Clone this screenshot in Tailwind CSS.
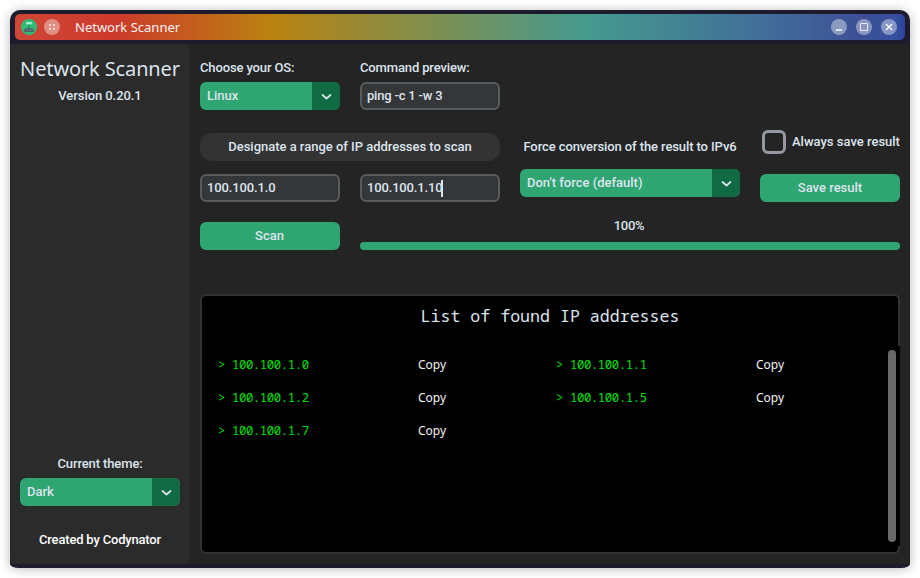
<!DOCTYPE html>
<html lang="en">
<head>
<meta charset="utf-8">
<title>Network Scanner</title>
<script src="https://cdn.jsdelivr.net/npm/@tailwindcss/browser@4"></script>
</head>
<body class="h-[578px] w-[920px] overflow-hidden bg-white p-[10px] font-['Roboto',sans-serif] text-[13px] leading-4 font-medium text-[#dce4ee]">
<div class="flex h-[558px] w-[900px] flex-col overflow-hidden rounded-[10px_10px_9px_9px/10px_10px_4px_4px] bg-[#1e1c2c] shadow-[0_1px_11px_rgba(0,0,0,0.28)]">
  <header class="h-[34px] shrink-0 px-[5px] pt-1">
    <div class="flex h-[26px] items-center rounded-[5px] bg-[linear-gradient(90deg,#ce4737_0%,#ce392c_11%,#b98310_29%,#459b8e_64%,#41699a_86%,#3c5096_95%,#3650a0_99%,#2b419b_100%)] pr-2 pl-[6px]">
      <svg class="size-4" viewBox="0 0 16 16"><circle cx="8" cy="8" r="8" fill="#2fba76"/><rect x="5" y="3" width="6" height="2.6" rx="1.3" fill="#a5efd0"/><path d="M8 5.5V10" stroke="#238057"/><path d="M4.7 9.5h6.6l1.7 1.3v2H3v-2z" fill="#3c555f"/><path d="M3.5 11.2h9" stroke="#7a8290"/></svg>
      <svg class="ml-[7px] size-4" viewBox="0 0 16 16"><circle cx="8" cy="8" r="8" fill="#fff" fill-opacity=".4"/><g fill="#fff"><circle cx="6" cy="6.1" r=".95"/><circle cx="10" cy="6.1" r=".95"/><circle cx="6" cy="9.8" r=".95"/><circle cx="10" cy="9.8" r=".95"/></g></svg>
      <span class="ml-[15px] font-['Noto_Sans',sans-serif] text-[13px] font-normal text-[#f4f4f4]">Network Scanner</span>
      <div class="ml-auto flex gap-[9px]">
        <svg class="size-4" viewBox="0 0 16 16"><circle cx="8" cy="8" r="8" fill="#fff" fill-opacity=".4"/><path d="M5 11h6" stroke="#fff" stroke-width="1.4"/></svg>
        <svg class="size-4" viewBox="0 0 16 16"><circle cx="8" cy="8" r="8" fill="#fff" fill-opacity=".4"/><path d="M4.5 4.5h7v7h-7z" fill="none" stroke="#e7eaf4"/></svg>
        <svg class="size-4" viewBox="0 0 16 16"><circle cx="8" cy="8" r="8" fill="#fff" fill-opacity=".4"/><path d="m5 5 6 6m0-6-6 6" stroke="#fff" stroke-width="1.4"/></svg>
      </div>
    </div>
  </header>
  <div class="flex h-[520px] bg-[#242424]">
    <aside class="flex w-[180px] flex-col items-center rounded-[5px] bg-[#2b2b2b] px-[10px]">
      <h1 class="mt-[11px] font-['Noto_Sans',sans-serif] text-[20px] leading-7 font-normal tracking-[-0.13px] whitespace-nowrap">Network Scanner</h1>
      <p class="mt-[5px] tracking-[-0.07px]">Version 0.20.1</p>
      <p class="mt-auto tracking-[-0.12px]">Current theme:</p>
      <button class="mt-[6px] flex h-7 w-full overflow-hidden rounded-[6px] bg-[#2fa572] text-left leading-7"><span class="flex-1 pl-[7px]">Dark</span><span class="flex w-7 items-center justify-center self-stretch bg-[#106a43]"><svg class="h-7 w-7" viewBox="0 0 28 28"><path d="m10.5 13 4 3.5 4-3.5" fill="none" stroke="#dce4ee" stroke-width="1.7" stroke-linecap="round" stroke-linejoin="round"/></svg></span></button>
      <p class="mt-[26px] mb-4 tracking-[-0.18px] text-white">Created by Codynator</p>
    </aside>
    <main class="flex flex-1 flex-col px-[10px]">
      <section class="mt-4 flex gap-5">
        <div class="w-[140px]">
          <p class="tracking-[-0.13px]">Choose your OS:</p>
          <button class="mt-[6px] flex h-7 w-full overflow-hidden rounded-[6px] bg-[#2fa572] text-left leading-7"><span class="flex-1 pl-[7px]">Linux</span><span class="flex w-7 items-center justify-center self-stretch bg-[#106a43]"><svg class="h-7 w-7" viewBox="0 0 28 28"><path d="m10.5 13 4 3.5 4-3.5" fill="none" stroke="#dce4ee" stroke-width="1.7" stroke-linecap="round" stroke-linejoin="round"/></svg></span></button>
        </div>
        <div class="w-[140px]">
          <p class="tracking-[-0.14px]">Command preview:</p>
          <div class="mt-[6px] flex h-7 items-center rounded-[6px] border-2 border-[#565b5e] bg-[#343638] pl-[5px] tracking-[-0.2px]">ping -c 1 -w 3</div>
        </div>
      </section>
      <section class="mt-5 flex h-[72px] gap-5">
        <div class="w-[300px] pt-[3px]">
          <p class="h-7 rounded-[12px] bg-[#333333] text-center leading-7 tracking-[-0.02px]">Designate a range of IP addresses to scan</p>
          <div class="mt-[13px] flex gap-5">
            <div class="flex h-7 w-[140px] items-center rounded-[6px] border-2 border-[#565b5e] bg-[#343638] pl-[5px] tracking-[-0.13px]">100.100.1.0</div>
            <div class="flex h-7 w-[140px] items-center rounded-[6px] border-2 border-[#565b5e] bg-[#343638] pl-[5px] tracking-[-0.16px]">100.100.1.10<span class="-ml-px h-[17px] w-[2px] bg-[#dce4ee]"></span></div>
          </div>
        </div>
        <div class="w-[220px] pt-[9px]">
          <p class="text-center tracking-[-0.1px]">Force conversion of the result to IPv6</p>
          <button class="mt-[14px] flex h-7 w-full overflow-hidden rounded-[6px] bg-[#2fa572] text-left leading-7"><span class="flex-1 pl-[7px]">Don't force (default)</span><span class="flex w-7 items-center justify-center self-stretch bg-[#106a43]"><svg class="h-7 w-7" viewBox="0 0 28 28"><path d="m10.5 13 4 3.5 4-3.5" fill="none" stroke="#dce4ee" stroke-width="1.7" stroke-linecap="round" stroke-linejoin="round"/></svg></span></button>
        </div>
        <div class="w-[140px]">
          <div class="flex items-center pl-[2px]"><span class="size-6 shrink-0 rounded-[6px] border-3 border-[#949a9f]"></span><span class="ml-[6px] whitespace-nowrap">Always save result</span></div>
          <button class="mt-5 block h-7 w-full rounded-[6px] bg-[#2fa572] leading-7">Save result</button>
        </div>
      </section>
      <section class="mt-5 flex h-7 gap-5">
        <button class="h-7 w-[140px] rounded-[6px] bg-[#2fa572] pr-px leading-7">Scan</button>
        <div class="flex flex-1 flex-col justify-between"><p class="-mt-1 pr-[2px] text-center tracking-[-0.3px]">100%</p><div class="h-2 rounded-[4px] bg-[#2fa572]"></div></div>
      </section>
      <section class="relative mt-11 h-[260px] rounded-[6px] border-2 border-[#333333] bg-black font-['Noto_Sans_Mono','DejaVu_Sans_Mono',monospace] font-normal">
        <h2 class="pt-2 text-center text-[16.6px] leading-6">List of found IP addresses</h2>
        <div class="mt-5 grid grid-cols-[200px_138px_200px_1fr] pl-4 text-[12.3px] leading-[33px] tracking-[-0.405px] text-[#00e000]">
          <span>&gt; 100.100.1.0</span><span class="font-['Noto_Sans',sans-serif] text-[12px] tracking-normal text-[#f2f2f2]">Copy</span><span>&gt; 100.100.1.1</span><span class="font-['Noto_Sans',sans-serif] text-[12px] tracking-normal text-[#f2f2f2]">Copy</span>
          <span>&gt; 100.100.1.2</span><span class="font-['Noto_Sans',sans-serif] text-[12px] tracking-normal text-[#f2f2f2]">Copy</span><span>&gt; 100.100.1.5</span><span class="font-['Noto_Sans',sans-serif] text-[12px] tracking-normal text-[#f2f2f2]">Copy</span>
          <span>&gt; 100.100.1.7</span><span class="font-['Noto_Sans',sans-serif] text-[12px] tracking-normal text-[#f2f2f2]">Copy</span>
        </div>
        <div class="absolute top-[50px] -right-[2px] flex h-[200px] w-[14px] justify-start bg-black pl-[2px]"><div class="mt-1 h-[192px] w-2 rounded-full bg-[#696969]"></div></div>
      </section>
    </main>
  </div>
</div>
</body>
</html>
